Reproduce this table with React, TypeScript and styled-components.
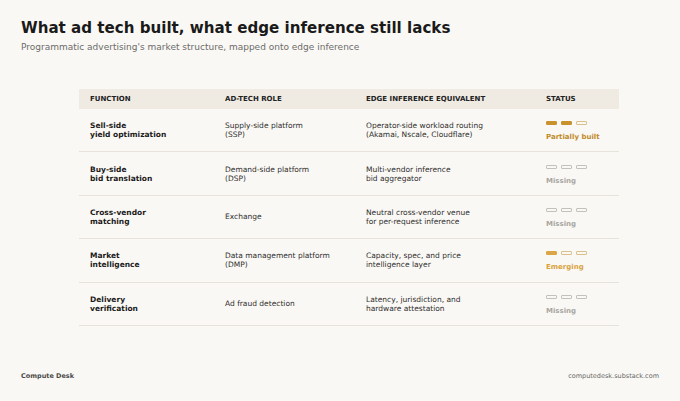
import styled, { createGlobalStyle } from 'styled-components'

const GlobalStyle = createGlobalStyle`
  html, body {
    margin: 0;
    padding: 0;
    background: #faf8f4;
  }
  body {
    font-family: 'DejaVu Sans', 'Noto Sans', sans-serif;
    color: #1c1c1c;
  }
`

const Page = styled.div`
  width: 680px;
  height: 401px;
  box-sizing: border-box;
  padding: 18.5px 21px 0;
  display: flex;
  flex-direction: column;
`

const Title = styled.h1`
  margin: 0;
  font-size: 15.1px;
  line-height: 18px;
  font-weight: 700;
  color: #1a1a1a;
`

const Subtitle = styled.p`
  margin: 5px 0 0;
  font-size: 9px;
  line-height: 11px;
  color: #6b6b6b;
`

const Table = styled.div`
  margin: 36.5px 0 0 58px;
  width: 540px;
  display: grid;
  grid-template-columns: 135px 141px 180px 84px;
`

const HeadCell = styled.div`
  background: #f0ebe2;
  height: 20px;
  padding: 0 11px;
  display: flex;
  align-items: center;
  font-size: 7px;
  font-weight: 700;
  color: #222;
  text-transform: uppercase;
`

const Cell = styled.div<{ $strong?: boolean }>`
  box-sizing: border-box;
  padding: 0 11px;
  height: 43.4px;
  border-bottom: 1px solid #e7e3db;
  display: flex;
  flex-direction: column;
  justify-content: center;
  font-size: 7.5px;
  line-height: 9px;
  font-weight: ${(props) => (props.$strong ? 700 : 400)};
  color: ${(props) => (props.$strong ? '#1a1a1a' : '#2e2e2e')};
`

const StatusCell = styled(Cell)`
  padding-top: 3px;
`

const Bars = styled.div`
  display: flex;
  gap: 4px;
  margin-bottom: 8px;
`

const Bar = styled.span<{ $filled: boolean; $tone: string; $edge: string }>`
  width: 11px;
  height: 4px;
  box-sizing: border-box;
  border-radius: 1px;
  background: ${(props) => (props.$filled ? props.$tone : 'transparent')};
  border: 1px solid ${(props) => (props.$filled ? props.$tone : props.$edge)};
`

const StatusLabel = styled.span<{ $tone: string }>`
  font-size: 7px;
  font-weight: 700;
  color: ${(props) => props.$tone};
`

const Footer = styled.div`
  margin-top: auto;
  height: 29px;
  display: flex;
  justify-content: space-between;
  align-items: flex-start;
  font-size: 6.5px;
  color: #666;
`

const Brand = styled.span`
  font-weight: 700;
  color: #4a4a4a;
`

type Status = 'partial' | 'missing' | 'emerging'

const statusStyles: Record<
  Status,
  { label: string; filled: number; bar: string; edge: string; text: string }
> = {
  partial: { label: 'Partially built', filled: 2, bar: '#c8922f', edge: '#dcc08c', text: '#c08a2a' },
  missing: { label: 'Missing', filled: 0, bar: '#b9b6b0', edge: '#c4c1bb', text: '#a9a6a1' },
  emerging: { label: 'Emerging', filled: 1, bar: '#dba645', edge: '#dcc08c', text: '#d9a23e' },
}

const rows: { fn: string[]; role: string[]; edge: string[]; status: Status }[] = [
  {
    fn: ['Sell-side', 'yield optimization'],
    role: ['Supply-side platform', '(SSP)'],
    edge: ['Operator-side workload routing', '(Akamai, Nscale, Cloudflare)'],
    status: 'partial',
  },
  {
    fn: ['Buy-side', 'bid translation'],
    role: ['Demand-side platform', '(DSP)'],
    edge: ['Multi-vendor inference', 'bid aggregator'],
    status: 'missing',
  },
  {
    fn: ['Cross-vendor', 'matching'],
    role: ['Exchange'],
    edge: ['Neutral cross-vendor venue', 'for per-request inference'],
    status: 'missing',
  },
  {
    fn: ['Market', 'intelligence'],
    role: ['Data management platform', '(DMP)'],
    edge: ['Capacity, spec, and price', 'intelligence layer'],
    status: 'emerging',
  },
  {
    fn: ['Delivery', 'verification'],
    role: ['Ad fraud detection'],
    edge: ['Latency, jurisdiction, and', 'hardware attestation'],
    status: 'missing',
  },
]

const Lines = ({ lines }: { lines: string[] }) => (
  <>
    {lines.map((line) => (
      <span key={line}>{line}</span>
    ))}
  </>
)

export default function App() {
  return (
    <>
      <GlobalStyle />
      <Page>
        <Title>What ad tech built, what edge inference still lacks</Title>
        <Subtitle>Programmatic advertising's market structure, mapped onto edge inference</Subtitle>
        <Table>
          <HeadCell>Function</HeadCell>
          <HeadCell>Ad-tech role</HeadCell>
          <HeadCell>Edge inference equivalent</HeadCell>
          <HeadCell>Status</HeadCell>
          {rows.map((row) => {
            const s = statusStyles[row.status]
            return [
              <Cell key={row.fn[0] + 'fn'} $strong>
                <Lines lines={row.fn} />
              </Cell>,
              <Cell key={row.fn[0] + 'role'}>
                <Lines lines={row.role} />
              </Cell>,
              <Cell key={row.fn[0] + 'edge'}>
                <Lines lines={row.edge} />
              </Cell>,
              <StatusCell key={row.fn[0] + 'status'}>
                <Bars>
                  {[0, 1, 2].map((i) => (
                    <Bar key={i} $filled={i < s.filled} $tone={s.bar} $edge={s.edge} />
                  ))}
                </Bars>
                <StatusLabel $tone={s.text}>{s.label}</StatusLabel>
              </StatusCell>,
            ]
          })}
        </Table>
        <Footer>
          <Brand>Compute Desk</Brand>
          <span>computedesk.substack.com</span>
        </Footer>
      </Page>
    </>
  )
}
